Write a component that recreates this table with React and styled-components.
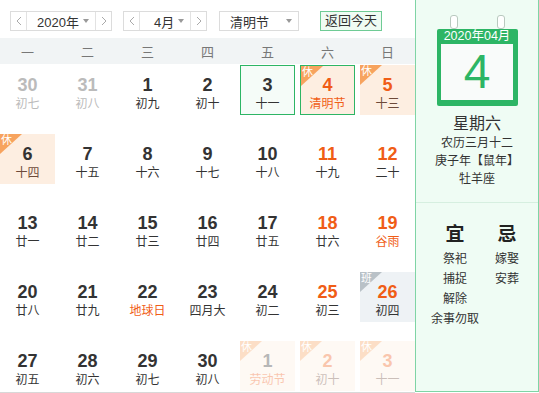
import React from 'react'
import styled, { createGlobalStyle } from 'styled-components'

const GREEN = '#2db565'
const GREEN_BORDER = '#7fd4a5'
const ORANGE = '#f05d16'
const TEXT = '#333'

const GlobalStyle = createGlobalStyle`
  body {
    margin: 0;
    background: #fff;
    font-family: "Liberation Sans", "Noto Sans CJK SC", sans-serif;
    color: ${TEXT};
  }
`

const Page = styled.div`
  width: 539px;
  height: 393px;
  display: flex;
  overflow: hidden;
`

const Calendar = styled.div`
  width: 415px;
  height: 392px;
  border-bottom: 1px solid #d8d8d8;
  display: flex;
  flex-direction: column;
`

const Toolbar = styled.div`
  height: 38px;
  display: flex;
  align-items: flex-start;
  padding: 11px 0 0 10px;
  box-sizing: border-box;
`

const Picker = styled.div`
  display: flex;
  height: 20px;
  border: 1px solid #dcdcdc;
  box-sizing: border-box;
  margin-right: ${p => p.$gap || 12}px;
  font-size: 13px;
`

const Step = styled.div`
  width: 15px;
  display: flex;
  align-items: center;
  justify-content: center;
  border-${p => (p.$side === 'left' ? 'right' : 'left')}: 1px solid #e2e2e2;
`

const PickerValue = styled.div`
  width: ${p => p.$w}px;
  display: flex;
  align-items: center;
  justify-content: space-between;
  padding: 0 6px 0 ${p => p.$pl || 10}px;
  box-sizing: border-box;
`

const Caret = styled.span`
  width: 0;
  height: 0;
  border-left: 3px solid transparent;
  border-right: 3px solid transparent;
  border-top: 4px solid #999;
`

const TodayButton = styled.button`
  margin-left: 9px;
  height: 20px;
  padding: 0 4px;
  border: 1px solid #6fcb95;
  background: #effbf3;
  font-family: inherit;
  font-size: 13px;
  color: ${TEXT};
  line-height: 18px;
`

const WeekHeader = styled.div`
  height: 26px;
  background: #f1f4f5;
  display: grid;
  grid-template-columns: repeat(7, 55px);
  column-gap: 5px;
  align-items: center;
  font-size: 13px;
  color: #777;
  text-align: center;
`

const Grid = styled.div`
  display: grid;
  grid-template-columns: repeat(7, 55px);
  grid-auto-rows: 50px;
  column-gap: 5px;
  row-gap: 19px;
  padding-top: 1px;
`

const Cell = styled.div`
  position: relative;
  box-sizing: border-box;
  display: flex;
  flex-direction: column;
  align-items: center;
  padding-top: ${p => (p.$bordered ? 8 : 9)}px;
  background: ${p => (p.$kind === 'rest' ? '#fdeee1' : p.$kind === 'work' ? '#eef2f5' : p.$today ? '#f5fcf8' : 'transparent')};
  border: ${p => (p.$bordered ? `1px solid ${GREEN}` : 'none')};
  opacity: ${p => (p.$next ? 0.35 : 1)};
`

const DayNum = styled.div`
  font-size: 18px;
  font-weight: bold;
  line-height: 22px;
  color: ${p => (p.$muted ? '#bbb' : p.$hot ? ORANGE : TEXT)};
`

const Lunar = styled.div`
  font-size: 12px;
  line-height: 16px;
  margin-top: 0;
  color: ${p => (p.$muted ? '#bbb' : p.$hot ? ORANGE : p.$rest ? '#6d4a3a' : TEXT)};
`

const Corner = styled.div`
  position: absolute;
  top: 0;
  left: 0;
  width: 22px;
  height: 20px;
  background: ${p => (p.$work ? '#b9c1c7' : '#f7a35e')};
  clip-path: polygon(0 0, 100% 0, 0 100%);
  color: #fff;
  font-size: 11px;
  line-height: 13px;
  padding-left: 1px;
  box-sizing: border-box;
`

const Side = styled.div`
  flex: 1;
  height: 392px;
  box-sizing: border-box;
  background: #effcf4;
  border: 1px solid ${GREEN_BORDER};
  border-top: none;
  display: flex;
  flex-direction: column;
`

const Summary = styled.div`
  height: 203px;
  border-bottom: 1px solid #d6efe0;
  display: flex;
  flex-direction: column;
  align-items: center;
  padding-top: 16px;
  box-sizing: border-box;
`

const DateBadge = styled.div`
  position: relative;
  width: 81px;
  height: 77px;
  margin-top: 13px;
  background: ${GREEN};
  border-radius: 2px;
  display: flex;
  flex-direction: column;
  align-items: center;
`

const Ring = styled.span`
  position: absolute;
  top: -14px;
  ${p => p.$side}: 13px;
  width: 6px;
  height: 12px;
  border-radius: 3px;
  background: #fff;
  border: 1px solid #b9c9bf;
`

const BadgeTitle = styled.div`
  color: #fff;
  font-size: 12.5px;
  line-height: 15px;
`

const BadgeBody = styled.div`
  width: 72px;
  height: 56px;
  background: #f9fbfa;
  color: ${GREEN};
  font-size: 48px;
  line-height: 56px;
  text-align: center;
`

const Weekday = styled.div`
  font-size: 16px;
  line-height: 20px;
  margin-top: 8px;
`

const Info = styled.div`
  font-size: 12px;
  line-height: 18px;
  text-align: center;
`

const Almanac = styled.div`
  display: flex;
  justify-content: center;
  gap: 8px;
  padding: 20px 0 0 8px;
`

const AlmanacCol = styled.div`
  width: 44px;
  display: flex;
  flex-direction: column;
  align-items: center;
  font-size: 12px;
  line-height: 20px;
  white-space: nowrap;
`

const AlmanacHead = styled.div`
  font-size: 19px;
  font-weight: bold;
  line-height: 24px;
  margin-bottom: 2px;
  color: #222;
`

const Chevron = ({ dir }) => (
  <svg width="6" height="10" viewBox="0 0 6 10">
    <path d={dir === 'left' ? 'M5 1 L1 5 L5 9' : 'M1 1 L5 5 L1 9'} fill="none" stroke="#aaa" strokeWidth="1" />
  </svg>
)

const weeks = ['一', '二', '三', '四', '五', '六', '日']

const days = [
  { n: 30, l: '初七', muted: true }, { n: 31, l: '初八', muted: true },
  { n: 1, l: '初九' }, { n: 2, l: '初十' }, { n: 3, l: '十一', today: true },
  { n: 4, l: '清明节', kind: 'rest', hot: true, hotL: true, selected: true },
  { n: 5, l: '十三', kind: 'rest', hot: true },
  { n: 6, l: '十四', kind: 'rest' }, { n: 7, l: '十五' }, { n: 8, l: '十六' },
  { n: 9, l: '十七' }, { n: 10, l: '十八' }, { n: 11, l: '十九', hot: true }, { n: 12, l: '二十', hot: true },
  { n: 13, l: '廿一' }, { n: 14, l: '廿二' }, { n: 15, l: '廿三' }, { n: 16, l: '廿四' },
  { n: 17, l: '廿五' }, { n: 18, l: '廿六', hot: true }, { n: 19, l: '谷雨', hot: true, hotL: true },
  { n: 20, l: '廿八' }, { n: 21, l: '廿九' }, { n: 22, l: '地球日', hotL: true }, { n: 23, l: '四月大' },
  { n: 24, l: '初二' }, { n: 25, l: '初三', hot: true }, { n: 26, l: '初四', kind: 'work', hot: true },
  { n: 27, l: '初五' }, { n: 28, l: '初六' }, { n: 29, l: '初七' }, { n: 30, l: '初八' },
  { n: 1, l: '劳动节', kind: 'rest', hotL: true, next: true },
  { n: 2, l: '初十', kind: 'rest', hot: true, next: true },
  { n: 3, l: '十一', kind: 'rest', hot: true, next: true }
]

export default function App() {
  return (
    <Page>
      <GlobalStyle />
      <Calendar>
        <Toolbar>
          <Picker $gap={11}>
            <Step $side="left"><Chevron dir="left" /></Step>
            <PickerValue $w={68}>2020年<Caret /></PickerValue>
            <Step $side="right"><Chevron dir="right" /></Step>
          </Picker>
          <Picker $gap={12}>
            <Step $side="left"><Chevron dir="left" /></Step>
            <PickerValue $w={50} $pl={14}>4月<Caret /></PickerValue>
            <Step $side="right"><Chevron dir="right" /></Step>
          </Picker>
          <Picker $gap={12}>
            <PickerValue $w={78}>清明节<Caret /></PickerValue>
          </Picker>
          <TodayButton>返回今天</TodayButton>
        </Toolbar>
        <WeekHeader>
          {weeks.map(w => <div key={w}>{w}</div>)}
        </WeekHeader>
        <Grid>
          {days.map((d, i) => (
            <Cell key={i} $kind={d.kind} $today={d.today} $bordered={d.today || d.selected} $next={d.next}>
              {d.kind && <Corner $work={d.kind === 'work'}>{d.kind === 'work' ? '班' : '休'}</Corner>}
              <DayNum $muted={d.muted} $hot={d.hot}>{d.n}</DayNum>
              <Lunar $muted={d.muted} $hot={d.hotL} $rest={d.kind === 'rest'}>{d.l}</Lunar>
            </Cell>
          ))}
        </Grid>
      </Calendar>
      <Side>
        <Summary>
          <DateBadge>
            <Ring $side="left" />
            <Ring $side="right" />
            <BadgeTitle>2020年04月</BadgeTitle>
            <BadgeBody>4</BadgeBody>
          </DateBadge>
          <Weekday>星期六</Weekday>
          <Info>农历三月十二</Info>
          <Info>庚子年【鼠年】</Info>
          <Info>牡羊座</Info>
        </Summary>
        <Almanac>
          <AlmanacCol>
            <AlmanacHead>宜</AlmanacHead>
            <div>祭祀</div>
            <div>捕捉</div>
            <div>解除</div>
            <div>余事勿取</div>
          </AlmanacCol>
          <AlmanacCol>
            <AlmanacHead>忌</AlmanacHead>
            <div>嫁娶</div>
            <div>安葬</div>
          </AlmanacCol>
        </Almanac>
      </Side>
    </Page>
  )
}
